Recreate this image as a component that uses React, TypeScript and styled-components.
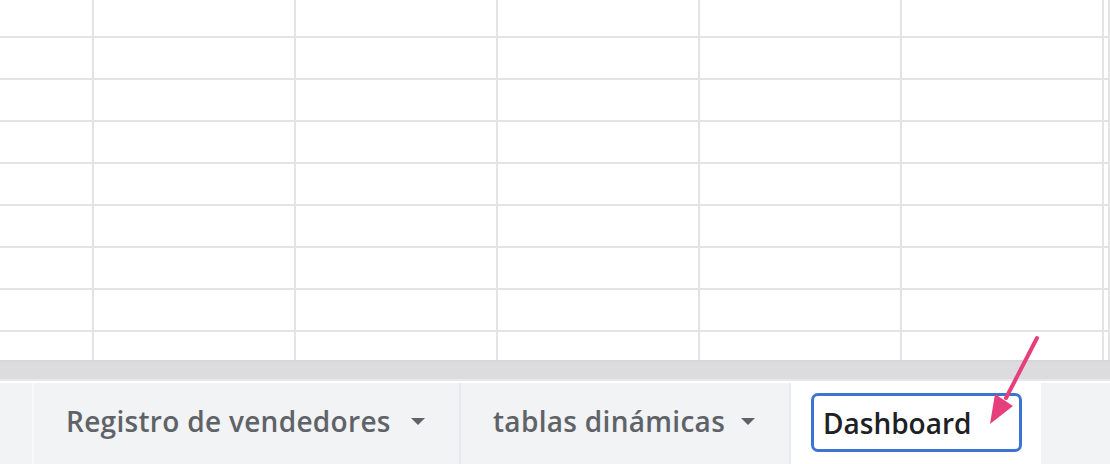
import styled, { createGlobalStyle } from "styled-components";

const GlobalStyle = createGlobalStyle`
  html, body {
    margin: 0;
    padding: 0;
    background: #ffffff;
    overflow: hidden;
  }
  body {
    font-family: "Open Sans", "Liberation Sans", Arial, sans-serif;
  }
`;

const Page = styled.div`
  position: relative;
  width: 1110px;
  height: 464px;
  display: flex;
  flex-direction: column;
  overflow: hidden;
`;

const Grid = styled.div`
  display: grid;
  grid-template-columns: 94px repeat(5, 202px) 6px;
  grid-template-rows: 38px repeat(7, 42px) 28px;
  border-bottom: 2px solid #d6d6d6;
`;

const Cell = styled.div<{ $last?: boolean }>`
  box-sizing: border-box;
  border-right: 2px solid #e3e3e3;
  border-bottom: ${(p) => (p.$last ? "none" : "2px solid #e3e3e3")};
`;

const ScrollBand = styled.div`
  height: 17px;
  background: #dcdcdf;
  border-bottom: 2px solid #e8e8ea;
`;

const WhiteGap = styled.div`
  height: 2px;
  background: #ffffff;
`;

const TabBar = styled.div`
  flex: 1;
  display: flex;
  align-items: stretch;
  background: #f1f3f4;
`;

const Spacer = styled.div`
  width: 32px;
  border-right: 2px solid #f8f9fa;
`;

const Tab = styled.div<{ $width: number }>`
  box-sizing: border-box;
  width: ${(p) => p.$width}px;
  display: flex;
  align-items: center;
  padding: 0 34px 6px 32px;
  border-right: 2px solid #e8eaed;
  color: #5f6368;
  font-size: 28px;
  font-weight: 600;
  letter-spacing: 0.3px;
`;

const TabLabel = styled.span`
  flex: 1;
  white-space: nowrap;
`;

const Caret = styled.span`
  width: 0;
  height: 0;
  border-left: 7.5px solid transparent;
  border-right: 7.5px solid transparent;
  border-top: 7px solid #5f6368;
  margin-top: 2px;
`;

const ActiveTab = styled.div`
  box-sizing: border-box;
  width: 250px;
  background: #ffffff;
  padding: 10px 19px 12px 20px;
  display: flex;
`;

const NameInput = styled.div`
  flex: 1;
  box-sizing: border-box;
  border: 3px solid #3d74d4;
  border-radius: 7px;
  display: flex;
  align-items: center;
  padding-left: 9px;
  color: #202124;
  font-size: 28px;
  font-weight: 600;
`;

const Arrow = styled.svg`
  position: absolute;
  left: 0;
  top: 0;
  pointer-events: none;
`;

const rows = 9;
const cols = 7;

export default function App() {
  const cells = [];
  for (let r = 0; r < rows; r++) {
    for (let c = 0; c < cols; c++) {
      cells.push(<Cell key={`${r}-${c}`} $last={r === rows - 1} />);
    }
  }

  return (
    <>
      <GlobalStyle />
      <Page>
        <Grid>{cells}</Grid>
        <ScrollBand />
        <WhiteGap />
        <TabBar>
          <Spacer />
          <Tab $width={427}>
            <TabLabel>Registro de vendedores</TabLabel>
            <Caret />
          </Tab>
          <Tab $width={330}>
            <TabLabel>tablas dinámicas</TabLabel>
            <Caret />
          </Tab>
          <ActiveTab>
            <NameInput>Dashboard</NameInput>
          </ActiveTab>
        </TabBar>
        <Arrow width="1110" height="464" viewBox="0 0 1110 464">
          <line x1="1037" y1="338" x2="1006" y2="398" stroke="#e6407c" strokeWidth="4" strokeLinecap="round" />
          <polygon points="990,424 995,394 1013,406" fill="#e6407c" />
        </Arrow>
      </Page>
    </>
  );
}
